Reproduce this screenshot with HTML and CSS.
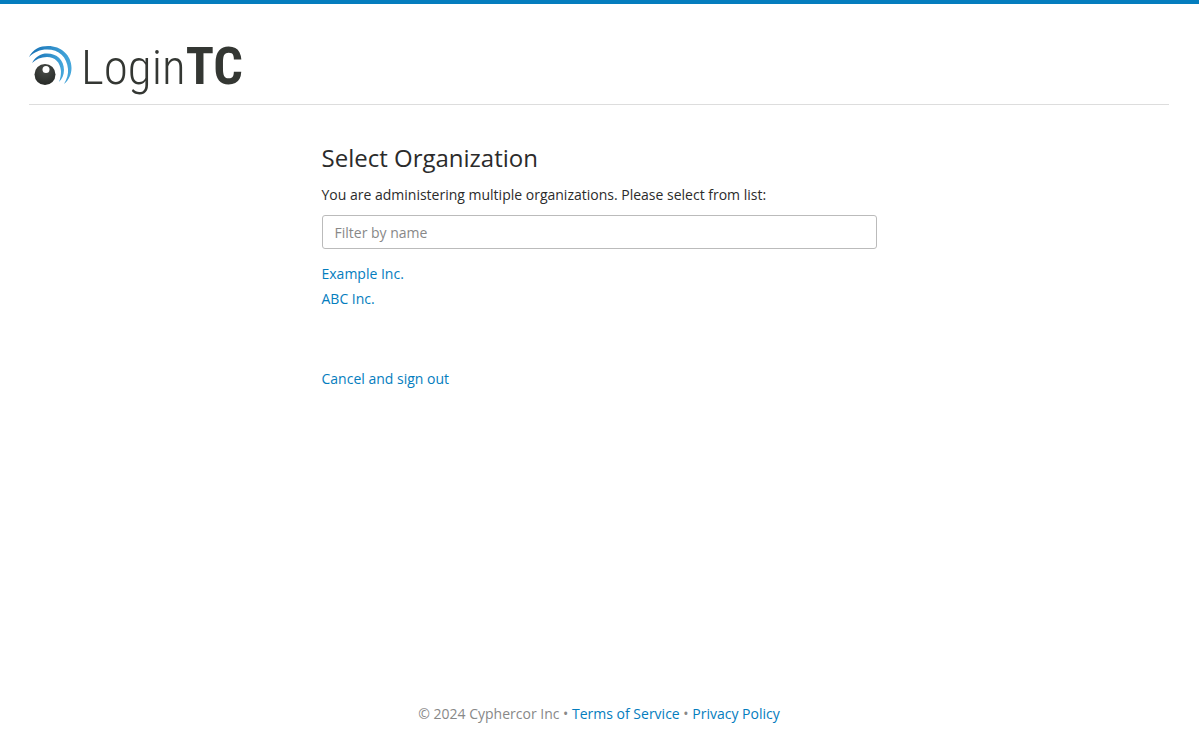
FILE: index.html
```html
<!DOCTYPE html>
<html lang="en">
<head>
<meta charset="utf-8">
<meta name="viewport" content="width=device-width, initial-scale=1">
<title>LoginTC - Select Organization</title>
<link rel="stylesheet" href="styles.css">
</head>
<body class="page">
<header class="header">
  <div class="brand">
    <svg class="brand-mark" viewBox="0 0 44 42" aria-hidden="true">
      <defs>
        <linearGradient id="wave" x1="0" y1="0" x2="1" y2="0"><stop offset="0" stop-color="#1670b4"/><stop offset="1" stop-color="#46a8dc"/></linearGradient>
        <radialGradient id="eye" cx=".5" cy=".3" r=".7"><stop offset="0" stop-color="#4a4d49"/><stop offset="1" stop-color="#272a27"/></radialGradient>
      </defs>
      <path fill="url(#wave)" d="M0 12C4 4 11 1 19 1C32 1 42.500 10 42.500 23C42.500 29 40 35 35 39C38 34 39.500 29 39 24C38 12 30 4.500 18 4.500C11 4.500 5 7 0 12Z"/>
      <path fill="url(#wave)" d="M3 18C7 11 12 8.500 18 8.500C28 8.500 35 15 35 25C35 30 33 34 30 37C31.500 33 32 30 32 26C31 17 26 12 18 12C12 12 7 14 3 18Z"/>
      <circle cx="16" cy="29.500" r="10.500" fill="url(#eye)"/>
      <circle cx="17" cy="24.500" r="3.500" fill="#fff"/>
    </svg>
    <span class="wordmark"><span class="word-light">Login</span><span class="word-bold">TC</span></span>
  </div>
</header>
<main class="content">
  <h1 class="title">Select Organization</h1>
  <label class="lead" for="filter">You are administering multiple organizations. Please select from list:</label>
  <input class="filter" id="filter" type="text" placeholder="Filter by name">
  <ul class="organizations">
    <li><a class="link" href="#">Example Inc.</a></li>
    <li><a class="link" href="#">ABC Inc.</a></li>
  </ul>
  <a class="link" href="#">Cancel and sign out</a>
</main>
<footer class="footer">© 2024 Cyphercor Inc • <a class="link" href="#">Terms of Service</a> • <a class="link" href="#">Privacy Policy</a></footer>
</body>
</html>
```

FILE: styles.css
```css
* { box-sizing: border-box; }

.page {
  display: flex;
  flex-direction: column;
  min-height: 100vh;
  margin: 0;
  padding: 0 30px 12px 29px;
  border-top: 4px solid #047dbe;
  background: #fff;
  color: #2b2b2b;
  font: 14px/20px "Open Sans", sans-serif;
}

.header {
  padding-top: 36px;
  border-bottom: 1px solid #ddd;
}

.brand {
  display: flex;
  gap: 8px;
  height: 64px;
}

.brand-mark {
  width: 44px;
  height: 42px;
  margin-top: 5px;
}

.wordmark {
  color: #343733;
  font-family: "Roboto Condensed", Roboto, sans-serif;
  line-height: 54px;
  white-space: nowrap;
}

.word-light {
  font-size: 49px;
  font-weight: 300;
}

.word-bold {
  font-size: 52px;
  font-weight: 700;
}

.content {
  flex: 1;
  width: 100%;
  max-width: 555px;
  margin: 0 auto;
  padding-top: 32px;
}

.title {
  margin: 0 0 7px;
  font-size: 24px;
  font-weight: 400;
  line-height: 41px;
}

.lead {
  display: block;
  margin-bottom: 10px;
}

.filter {
  display: block;
  width: 100%;
  height: 34px;
  padding: 6px 12px;
  border: 1px solid #bbb;
  border-radius: 3px;
  background: #fff;
  color: #2b2b2b;
  font: inherit;
}

.filter::placeholder {
  color: #888;
  opacity: 1;
}

.organizations {
  margin: 12px 0 58px;
  padding: 0;
  list-style: none;
  line-height: 25px;
}

.link {
  color: #047dbe;
  text-decoration: none;
}

.link:hover { text-decoration: underline; }

.footer {
  color: #888;
  text-align: center;
}
```
